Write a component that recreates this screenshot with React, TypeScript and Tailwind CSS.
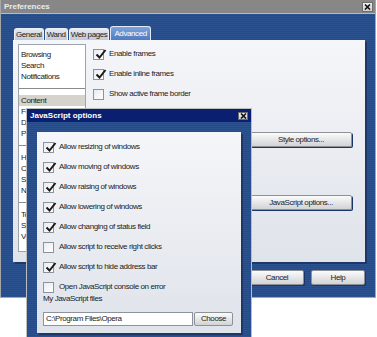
import React from 'react';

const blue =
  'bg-[repeating-linear-gradient(0deg,#2d5290_0px,#2d5290_1px,#274a85_1px,#274a85_2px)]';

function Check({ checked }: { checked: boolean }) {
  return (
    <span className="relative w-[11px] h-[11px] shrink-0 border border-[#8d939c] bg-gradient-to-br from-[#e9ebef] to-white">
      {checked && (
        <svg className="absolute left-[1px] top-[-2px]" width="12" height="12" viewBox="0 0 12 12">
          <path d="M1.5 6.5 L4.5 9.5 L10.5 2" stroke="#1a1a1a" strokeWidth="2" fill="none" />
        </svg>
      )}
    </span>
  );
}

function Btn({ children, className = '' }: { children: React.ReactNode; className?: string }) {
  return (
    <div
      className={`flex items-center justify-center border border-[#8f9196] rounded-[2px] bg-gradient-to-b from-[#fbfbfb] to-[#d2d3d6] text-[#222] shadow-[1px_1px_0_#1b3463] ${className}`}
    >
      {children}
    </div>
  );
}

function CloseBox({ className = '' }: { className?: string }) {
  return (
    <div className={`flex items-center justify-center border border-[#6d6d6d] bg-gradient-to-b from-[#f4f4f4] to-[#cfcfcf] ${className}`}>
      <svg width="7" height="6" viewBox="0 0 7 6">
        <path d="M1 0.5 L6 5.5 M6 0.5 L1 5.5" stroke="#111" strokeWidth="1.6" />
      </svg>
    </div>
  );
}

const categories: (string | null)[] = [
  'Browsing',
  'Search',
  'Notifications',
  null,
  'Content',
  'Fonts',
  'Downloads',
  'Programs',
  null,
  'History',
  'Cookies',
  'Security',
  'Network',
  null,
  'Toolbars',
  'Shortcuts',
  'Voice',
];

const jsOptions = [
  { label: 'Allow resizing of windows', on: true },
  { label: 'Allow moving of windows', on: true },
  { label: 'Allow raising of windows', on: true },
  { label: 'Allow lowering of windows', on: true },
  { label: 'Allow changing of status field', on: true },
  { label: 'Allow script to receive right clicks', on: false },
  { label: 'Allow script to hide address bar', on: true },
  { label: 'Open JavaScript console on error', on: false },
];

export default function App() {
  const tabs = ['General', 'Wand', 'Web pages', 'Advanced'];

  return (
    <div className="relative w-[377px] h-[337px] overflow-hidden bg-white font-['Liberation_Sans',Arial,sans-serif] text-[8px] tracking-[-0.4px] text-[#1b1b1b] leading-none">
      {/* Preferences window */}
      <div className="w-[376px] h-[298px] flex flex-col border-x border-b border-[#a7a7a7]">
        <div className="h-[14px] shrink-0 flex items-center justify-between pl-[3px] pr-[2px] bg-[#878787] border-b border-[#b9b9b9]">
          <span className="font-bold tracking-normal text-[#ececec]">Preferences</span>
          <CloseBox className="w-[11px] h-[10px]" />
        </div>

        <div className={`flex-1 flex flex-col px-[12px] pt-[12px] ${blue}`}>
          {/* tabs */}
          <div className="h-[14px] flex items-end gap-[1px] pl-[1px]">
            {tabs.map((t) => (
              <div
                key={t}
                className={
                  t === 'Advanced'
                    ? 'h-[14px] px-[3px] flex items-center rounded-t-[3px] border border-b-0 border-[#e4ebf7] bg-gradient-to-b from-[#7ba3dc] to-[#4f7cc0] text-white'
                    : 'h-[12px] px-[1px] flex items-center rounded-t-[3px] border border-b-0 border-[#eef1f6] bg-gradient-to-b from-[#e6ebf2] to-[#bfc9d8] text-[#1b1b1b]'
                }
              >
                {t}
              </div>
            ))}
          </div>

          {/* tab page */}
          <div className="w-[352px] h-[222px] flex gap-[7px] px-[5px] pt-[4px] bg-gradient-to-b from-[#f5f6f9] to-[#dfe3ea] shadow-[2px_2px_0_#1d3766]">
            <div className="w-[68px] h-[208px] shrink-0 flex flex-col pt-[4px] bg-white border border-[#9ea3ab]">
              {categories.map((c, i) =>
                c === null ? (
                  <div key={i} className="h-[13px] flex items-center">
                    <div className="w-full h-px bg-[#8a8a8a]" />
                  </div>
                ) : (
                  <div
                    key={i}
                    className={`h-[11px] flex items-center pl-[2px] ${c === 'Content' ? 'bg-[#d6d3cd]' : ''}`}
                  >
                    {c}
                  </div>
                ),
              )}
            </div>

            <div className="flex-1 flex flex-col pr-[8px]">
              {[
                { label: 'Enable frames', on: true },
                { label: 'Enable inline frames', on: true },
                { label: 'Show active frame border', on: false },
              ].map((o) => (
                <div key={o.label} className="h-[20px] flex items-center gap-[5px]">
                  <Check checked={o.on} />
                  <span>{o.label}</span>
                </div>
              ))}
              <Btn className="self-end w-[102px] h-[15px] mt-[28px]">Style options...</Btn>
              <Btn className="self-end w-[102px] h-[15px] mt-[48px]">JavaScript options...</Btn>
            </div>
          </div>

          {/* bottom buttons */}
          <div className="flex justify-end gap-[7px] mt-[8px] w-[352px]">
            <Btn className="w-[54px] h-[15px]">OK</Btn>
            <Btn className="w-[54px] h-[15px]">Cancel</Btn>
            <Btn className="w-[54px] h-[15px]">Help</Btn>
          </div>
        </div>
      </div>

      {/* JavaScript options dialog */}
      <div className="absolute left-[26px] top-[108px] w-[226px] h-[232px] flex flex-col border border-[#bdbdbd]">
        <div className="h-[13px] shrink-0 flex items-center justify-between pl-[3px] pr-[3px] bg-[#0b1f70]">
          <span className="font-bold tracking-normal text-white">JavaScript options</span>
          <CloseBox className="w-[10px] h-[8px]" />
        </div>
        <div className={`flex-1 pl-[10px] pr-[9px] pt-[10px] ${blue}`}>
          <div className="w-[204px] h-[201px] flex flex-col pl-[6px] pt-[5px] bg-gradient-to-b from-[#f5f6f9] to-[#dfe3ea] shadow-[2px_2px_0_#1d3766]">
            {jsOptions.map((o, i) => (
              <div
                key={o.label}
                className={`${i === jsOptions.length - 1 ? 'h-[17px] pt-[3px]' : 'h-[20px]'} flex items-center gap-[5px]`}
              >
                <Check checked={o.on} />
                <span>{o.label}</span>
              </div>
            ))}
            <div className="h-[10px] flex items-center">My JavaScript files</div>
            <div className="flex items-center gap-[1px] mt-[8px]">
              <div className="w-[150px] h-[14px] flex items-center pl-[2px] bg-white border border-[#8d939c]">
                C:\Program Files\Opera
              </div>
              <Btn className="w-[39px] h-[14px] shadow-none">Choose</Btn>
            </div>
          </div>
        </div>
      </div>
    </div>
  );
}
